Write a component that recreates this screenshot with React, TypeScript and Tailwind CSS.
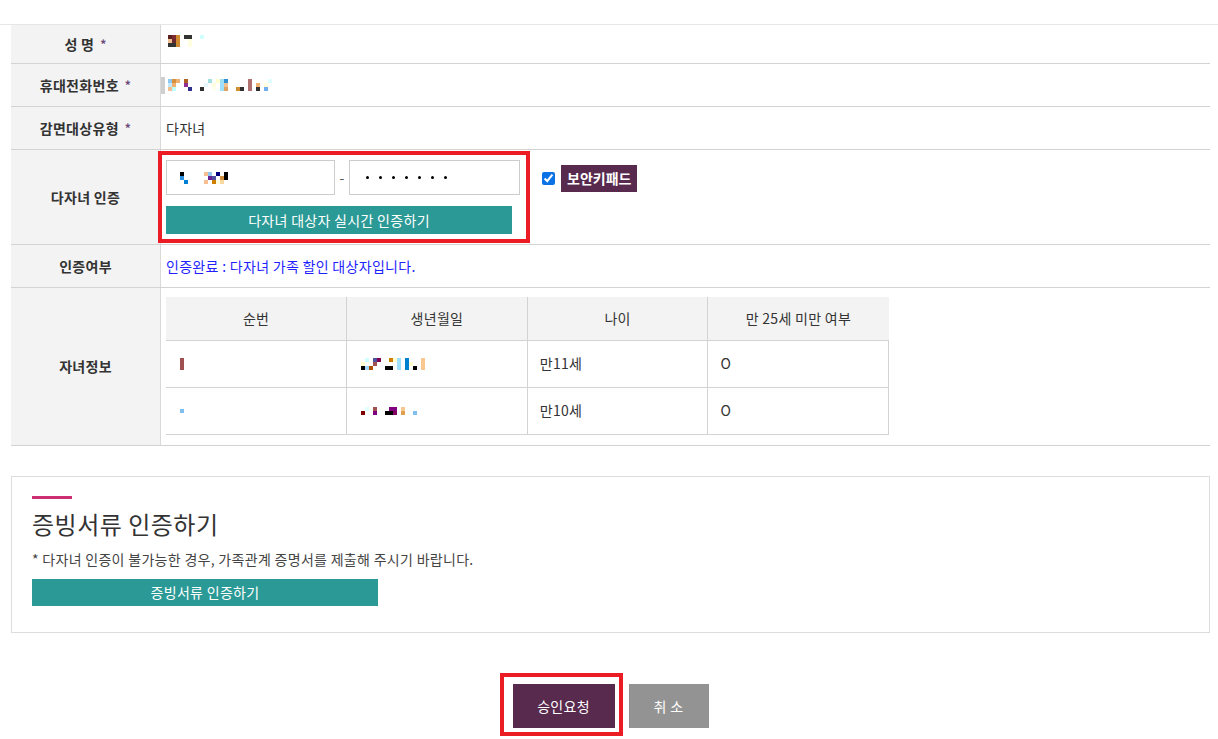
import React from 'react';

type Cell = [number, number, string];

// pixelated (masked) personal data, drawn as 4px blocks
const NAME: Cell[] = [
  [0, 0, '#5a2020'], [1, 0, '#7a2a30'], [2, 0, '#d08a30'], [4, 0, '#333333'], [5, 0, '#333333'], [8, 0, '#d0ffff'],
  [0, 1, '#f0c090'], [1, 1, '#6a2a30'], [2, 1, '#d08a30'], [5, 1, '#ffffe0'],
  [0, 2, '#333333'], [1, 2, '#333333'], [2, 2, '#d08a30'], [5, 2, '#ffffe0'],
];

const PHONE: Cell[] = [
  [0, 0, '#90c8f0'], [1, 0, '#d89040'], [2, 0, '#f0b070'], [4, 0, '#b06020'], [10, 0, '#a0e0e0'], [12, 0, '#ffffd0'],
  [13, 0, '#a0e0f0'], [14, 0, '#3090d0'], [20, 0, '#b07070'], [25, 0, '#e0ffff'],
  [0, 1, '#c0e8ff'], [1, 1, '#f0b070'], [4, 1, '#903090'], [9, 1, '#e8f8ff'], [11, 1, '#ffffe0'], [13, 1, '#a0e0ff'],
  [14, 1, '#f0c090'], [20, 1, '#b07070'], [22, 1, '#f0b070'], [24, 1, '#ffffe0'],
  [0, 2, '#f0c090'], [1, 2, '#c0ffff'], [5, 2, '#303090'], [8, 2, '#303030'], [11, 2, '#fffff0'], [13, 2, '#a0e0ff'],
  [14, 2, '#e0a060'], [17, 2, '#d09030'], [18, 2, '#303030'], [20, 2, '#b07070'], [22, 2, '#303030'], [24, 2, '#70b0f0'],
];

const BIRTH_FRONT: Cell[] = [
  [0, 0, '#000000'], [6, 0, '#f8c090'], [7, 0, '#90c8f0'], [9, 0, '#000080'], [11, 0, '#000000'],
  [0, 1, '#3090e0'], [7, 1, '#6a2090'], [8, 1, '#5050a0'], [10, 1, '#d09040'], [11, 1, '#000000'],
  [1, 2, '#0080d0'], [6, 2, '#f8c090'], [8, 2, '#d08000'], [9, 2, '#ffffe0'], [10, 2, '#f8d8a0'],
];

const CHILD1_NO: Cell[] = [[0, 0, '#a05050'], [0, 1, '#a05050'], [0, 2, '#a05050']];
const CHILD2_NO: Cell[] = [[0, 1, '#80c0f0']];

const CHILD1_BIRTH: Cell[] = [
  [1, 0, '#d0ffff'], [3, 0, '#5050a0'], [4, 0, '#800050'], [7, 0, '#d08000'], [8, 0, '#ffffd0'], [9, 0, '#a0e0ff'],
  [11, 0, '#0080d0'], [15, 0, '#f8c890'],
  [0, 1, '#ffffd0'], [3, 1, '#a05050'], [9, 1, '#a0e0ff'], [11, 1, '#0080d0'], [12, 1, '#ffffd0'], [15, 1, '#f8c890'],
  [0, 2, '#000000'], [1, 2, '#a0d8ff'], [2, 2, '#b05000'], [6, 2, '#000000'], [7, 2, '#000000'], [9, 2, '#a0e0ff'],
  [11, 2, '#0080d0'], [13, 2, '#000000'], [15, 2, '#f8c890'],
];

const CHILD2_BIRTH: Cell[] = [
  [1, 0, '#e0ffff'], [3, 0, '#a05050'], [7, 0, '#800080'], [8, 0, '#800080'], [10, 0, '#f8c890'],
  [0, 1, '#800000'], [3, 1, '#800080'], [6, 1, '#000000'], [7, 1, '#000000'], [8, 1, '#800060'], [10, 1, '#e0a050'],
  [13, 1, '#80c0f0'],
];

function Pixels({ cells, rows = 3 }: { cells: Cell[]; rows?: number }) {
  const cols = Math.max(...cells.map((c) => c[0])) + 1;
  return (
    <svg width={cols * 4} height={rows * 4} className="block shrink-0">
      {cells.map(([x, y, fill], i) => (
        <rect key={i} x={x * 4} y={y * 4} width={4} height={4} fill={fill} />
      ))}
    </svg>
  );
}

function Star() {
  return <span className="ml-[6px] text-[12px] text-[#6b4a7a] align-middle">*</span>;
}

interface RowProps {
  label: React.ReactNode;
  height: string;
  children?: React.ReactNode;
  last?: boolean;
}

function Row({ label, height, children, last }: RowProps) {
  return (
    <div className={`flex ${height} ${last ? '' : 'border-b border-[#d3d3d3]'}`}>
      <div className="w-[150px] shrink-0 bg-[#f3f3f3] border-r border-[#d9d9d9] flex items-center justify-center text-[14px] tracking-[0.3px] font-bold text-[#333]">
        {label}
      </div>
      <div className="flex-1 min-w-0 relative">{children}</div>
    </div>
  );
}

const children = [
  { no: CHILD1_NO, birth: CHILD1_BIRTH, age: '만11세', under25: 'O' },
  { no: CHILD2_NO, birth: CHILD2_BIRTH, age: '만10세', under25: 'O' },
];

export default function App() {
  return (
    <div className="w-[1218px] h-[739px] bg-white text-[#333] text-[14px] tracking-[0.3px] overflow-hidden font-['Malgun_Gothic','Noto_Sans_CJK_KR',sans-serif]">
      <div className="h-[25px] border-b border-[#e6e6e6]" />

      <div className="ml-[11px] w-[1199px]">
        {/* Applicant info */}
        <div className="border-b border-[#d3d3d3]">
          <Row label={<>성 명<Star /></>} height="h-[39px]">
            <div className="h-full flex items-center pl-[7px] pb-[6px]">
              <Pixels cells={NAME} />
            </div>
          </Row>

          <Row label={<>휴대전화번호<Star /></>} height="h-[43px]">
            <div className="h-full flex items-center">
              <div className="w-[4px] h-[17px] bg-[#cfcfcf]" />
              <div className="ml-[3px]">
                <Pixels cells={PHONE} />
              </div>
            </div>
          </Row>

          <Row label={<>감면대상유형<Star /></>} height="h-[43px]">
            <div className="h-full flex items-center pl-[5px] text-[#333]">다자녀</div>
          </Row>

          <Row label="다자녀 인증" height="h-[95px]">
            <div className="flex items-start pl-[5px] pt-[10px]">
              <div className="w-[354px]">
                <div className="flex items-center">
                  <div className="w-[169px] h-[35px] border border-[#cccccc] flex items-center pl-[13px]">
                    <Pixels cells={BIRTH_FRONT} />
                  </div>
                  <span className="w-[14px] text-center text-[#555]">-</span>
                  <div className="w-[171px] h-[35px] border border-[#cccccc] flex items-center pl-[16px] gap-[10px]">
                    {Array.from({ length: 7 }).map((_, i) => (
                      <span key={i} className="w-[3px] h-[3px] rounded-full bg-black" />
                    ))}
                  </div>
                </div>
                <button className="mt-[11px] w-[346px] h-[28px] bg-[#2b9995] text-white text-[14px] tracking-[0.3px]">
                  다자녀 대상자 실시간 인증하기
                </button>
              </div>
              <label className="ml-[22px] mt-[5px] flex items-center">
                <input type="checkbox" defaultChecked className="w-[13px] h-[13px] m-0 accent-[#0b73e6]" />
                <span className="ml-[6px] h-[27px] px-[6px] flex items-center bg-[#582a4e] text-white font-bold text-[14px] tracking-normal">
                  보안키패드
                </span>
              </label>
            </div>
            <div className="absolute left-[-3px] top-[1px] w-[372px] h-[92px] border-[4px] border-[#ec1c24] pointer-events-none" />
          </Row>

          <Row label="인증여부" height="h-[43px]">
            <div className="h-full flex items-center pl-[5px] text-[#1f1fff]">인증완료 : 다자녀 가족 할인 대상자입니다.</div>
          </Row>

          <Row label="자녀정보" height="h-[157px]" last>
            <div className="pl-[5px] pt-[9px]">
              <table className="w-[723px] border-collapse text-[14px] text-[#333]">
                <thead>
                  <tr className="h-[43px] bg-[#f3f3f3]">
                    <th className="w-1/4 font-normal border-b border-r border-[#d3d3d3]">순번</th>
                    <th className="w-1/4 font-normal border-b border-r border-[#d3d3d3]">생년월일</th>
                    <th className="w-1/4 font-normal border-b border-r border-[#d3d3d3]">나이</th>
                    <th className="w-1/4 font-normal border-b border-[#d3d3d3]">만 25세 미만 여부</th>
                  </tr>
                </thead>
                <tbody>
                  {children.map((c, i) => (
                    <tr key={i} className="h-[47px] border-b border-[#d3d3d3]">
                      <td className="border-r border-[#d3d3d3] pl-[14px]">
                        <Pixels cells={c.no} />
                      </td>
                      <td className="border-r border-[#d3d3d3] pl-[14px]">
                        <Pixels cells={c.birth} rows={i === 0 ? 3 : 2} />
                      </td>
                      <td className="border-r border-[#d3d3d3] pl-[12px]">{c.age}</td>
                      <td className="border-r border-[#d3d3d3] pl-[12px]">{c.under25}</td>
                    </tr>
                  ))}
                </tbody>
              </table>
            </div>
          </Row>
        </div>

        {/* Document verification */}
        <div className="mt-[30px] h-[157px] border border-[#dddddd] px-[20px] pt-[19px]">
          <div className="w-[40px] h-[3px] bg-[#cc2f72]" />
          <h3 className="mt-[9px] text-[24px] leading-[32px] tracking-[0.5px] text-[#333]">증빙서류 인증하기</h3>
          <p className="mt-[11px] text-[14px] leading-[17px] tracking-[0.3px] text-[#444]">
            * 다자녀 인증이 불가능한 경우, 가족관계 증명서를 제출해 주시기 바랍니다.
          </p>
          <button className="mt-[11px] w-[346px] h-[27px] bg-[#2b9995] text-white text-[14px] tracking-[0.3px]">증빙서류 인증하기</button>
        </div>

        {/* Actions */}
        <div className="mt-[51px] flex justify-center gap-[14px]">
          <div className="relative">
            <button className="w-[102px] h-[44px] bg-[#582a4e] text-white text-[14px]">승인요청</button>
            <div className="absolute left-[-13px] top-[-11px] w-[123px] h-[63px] border-[4px] border-[#ec1c24] pointer-events-none" />
          </div>
          <button className="w-[80px] h-[44px] bg-[#939393] text-white text-[14px]">취 소</button>
        </div>
      </div>
    </div>
  );
}
